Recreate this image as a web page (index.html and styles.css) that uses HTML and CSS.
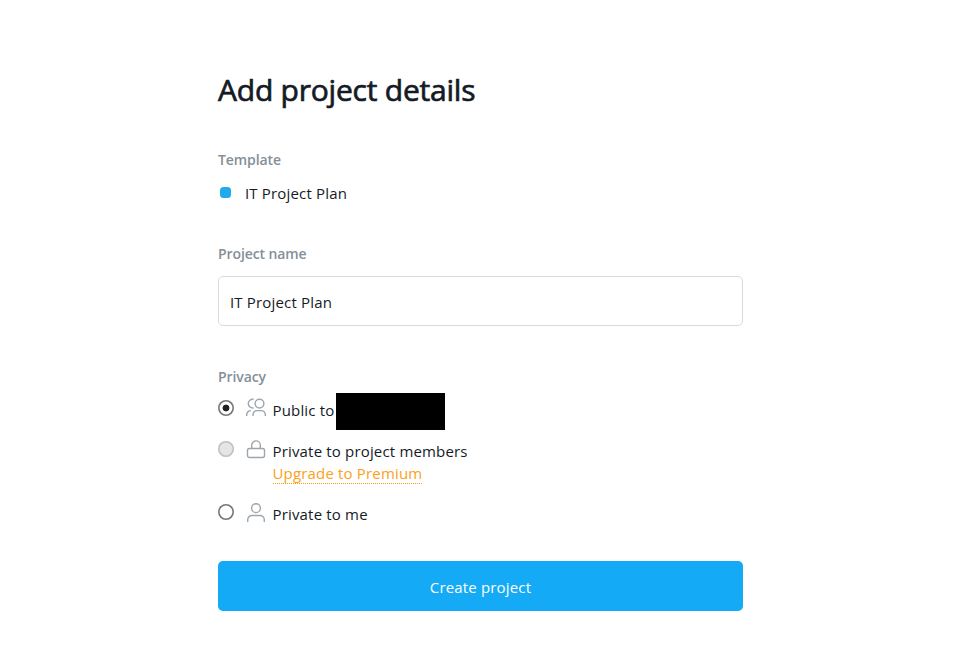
FILE: index.html
```html
<!DOCTYPE html>
<html lang="en">
<head>
<meta charset="utf-8">
<title>Add project details</title>
<link rel="stylesheet" href="styles.css">
</head>
<body>
<form class="details">
  <h1 class="title">Add project details</h1>

  <section class="template">
    <div class="label label-template">Template</div>
    <div class="template-row"><span class="swatch"></span><span class="value">IT Project Plan</span></div>
  </section>

  <section class="name">
    <label class="label label-name" for="name">Project name</label>
    <input class="input" id="name" type="text" value="IT Project Plan">
  </section>

  <section class="privacy">
    <div class="label label-privacy">Privacy</div>
    <div class="option option-public">
      <span class="radio radio-on"></span>
      <svg class="icon" viewBox="0 0 20 20"><circle cx="13.5" cy="5.6" r="4.4"/><path d="M7.6 1.3A4.4 4.4 0 1 0 7.6 9.9M7 18v-1.2a4.2 4.2 0 0 1 4.2-4.2h3.9a4.2 4.2 0 0 1 4.2 4.2V18M.7 18v-1.2a4.2 4.2 0 0 1 4.2-4.2"/></svg>
      <span class="text text-public">Public to</span><span class="redacted"></span>
    </div>
    <div class="option option-members">
      <span class="radio radio-disabled"></span>
      <svg class="icon" viewBox="0 0 20 20"><rect x="1.5" y="8.5" width="17" height="9" rx="2"/><path d="M5.7 8.5V5.2a4.3 4.3 0 0 1 8.6 0v3.3"/></svg>
      <div class="stack"><span class="text text-members">Private to project members</span><a class="upgrade">Upgrade to Premium</a></div>
    </div>
    <div class="option option-me">
      <span class="radio"></span>
      <svg class="icon" viewBox="0 0 20 20"><circle cx="10" cy="5.2" r="4.4"/><path d="M1.7 19v-2.2a4.3 4.3 0 0 1 4.3-4.3h8a4.3 4.3 0 0 1 4.3 4.3V19"/></svg>
      <span class="text text-me">Private to me</span>
    </div>
  </section>

  <button class="submit" type="button">Create project</button>
</form>
</body>
</html>
```
FILE: styles.css
```css
* { box-sizing: border-box; }
body {
  margin: 0;
  background: #fff;
  color: #151b26;
  font-family: "Open Sans", "Noto Sans", sans-serif;
  font-size: 15px;
  line-height: 22px;
  letter-spacing: .17px;
}
.details { width: 525px; margin-left: 218px; padding-top: 70px; }
.title {
  margin: 0;
  height: 40px;
  font-size: 30px;
  line-height: 40px;
  font-weight: 400;
  letter-spacing: -.22px;
  white-space: nowrap;
  -webkit-text-stroke: .7px #151b26;
}
.label { display: block; height: 22px; color: #848f99; font-size: 14px; font-weight: 600; letter-spacing: -.1px; }
.template { margin-top: 39px; }
.template-row { display: flex; align-items: flex-start; height: 22px; margin-top: 11px; padding-left: 2px; }
.swatch { width: 11px; height: 11px; margin: 5px 14px 0 0; border-radius: 3.5px; background: #20aaea; }
.name { margin-top: 39px; }
.input {
  display: block;
  width: 525px;
  height: 50px;
  margin-top: 11px;
  padding: 2px 11px 0;
  border: 1px solid #d5dce0;
  border-radius: 5px;
  outline: 0;
  color: #151b26;
  font: inherit;
  letter-spacing: inherit;
}
.privacy { margin-top: 40px; }
.option { display: flex; align-items: flex-start; }
.option-public { height: 37px; margin-top: 5px; }
.option-members { height: 44px; margin-top: 10px; }
.option-me { height: 22px; margin-top: 19px; }
.radio { flex: none; width: 16px; height: 16px; border-radius: 50%; box-shadow: inset 0 0 0 1.6px #767676; }
.radio-on { background: radial-gradient(circle, #222 3px, #fff 3.8px); }
.radio-disabled { box-shadow: inset 0 0 0 1.6px #c2c2c2; background: #e5e5e5; }
.option-public .radio { margin-top: 7px; }
.option-members .radio { margin-top: 1px; }
.option-me .radio { margin-top: 1px; }
.icon { flex: none; width: 20px; height: 20px; margin: 0 6.5px 0 12px; overflow: visible; fill: none; stroke: #9ca6af; stroke-width: 1.4; }
.option-public .icon { margin-top: 5px; }
.text { white-space: nowrap; }
.text-public { width: 63.5px; margin-top: 6px; }
.redacted { width: 109px; height: 37px; background: #000; }
.stack { display: flex; flex-direction: column; align-items: flex-start; }
.upgrade { height: 22px; border-bottom: 1px dotted #f2a100; color: #fba11c; white-space: nowrap; }
.submit {
  display: block;
  width: 525px;
  height: 50px;
  margin-top: 36px;
  padding: 2px 0 0;
  border: 0;
  border-radius: 5px;
  background: #14aaf5;
  color: #fff;
  font: inherit;
  letter-spacing: inherit;
}
```
